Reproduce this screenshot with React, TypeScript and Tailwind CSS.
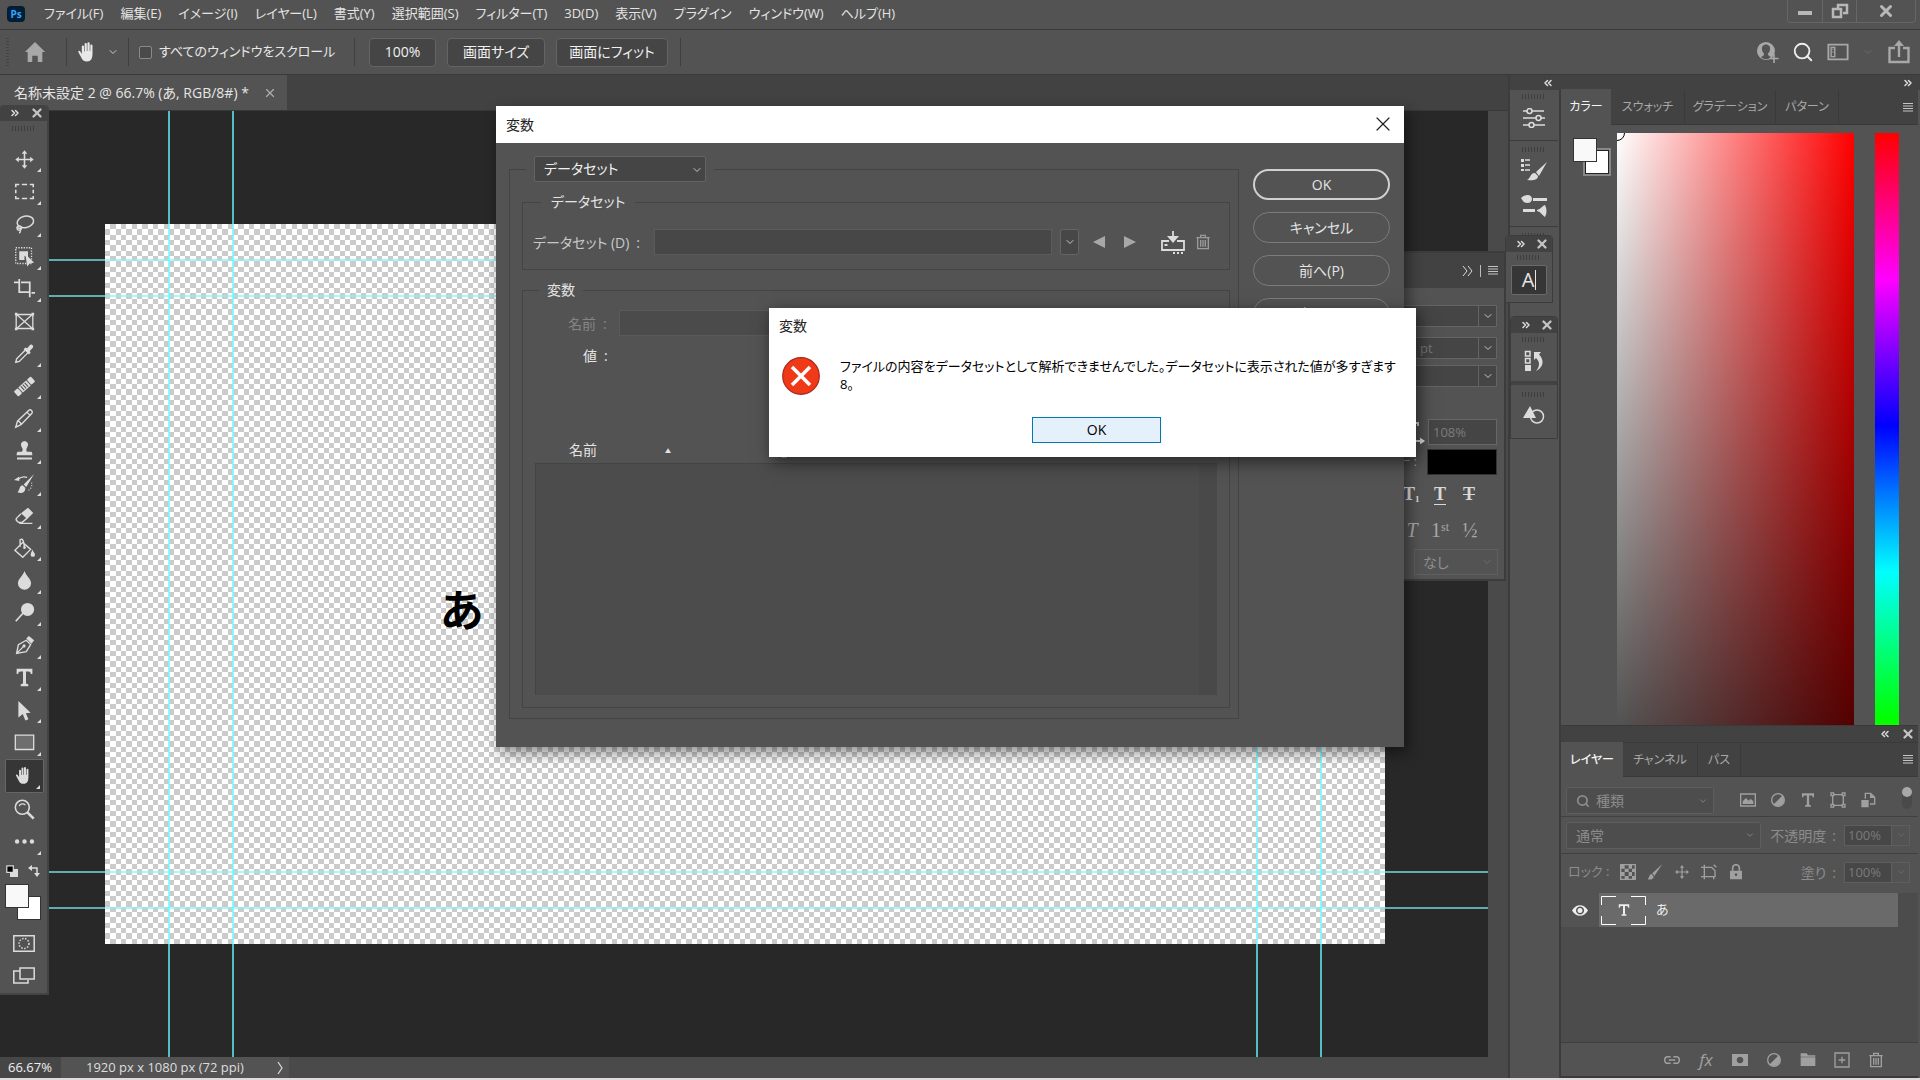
import { ReactNode } from 'react';
import { Search, X, ChevronDown, ChevronsRight, ChevronsLeft } from 'lucide-react';
import { clsx } from 'clsx';

interface IconProps {
  children: ReactNode;
  box?: string;
  className?: string;
}

const Icon = ({ children, box = '0 0 24 24', className = 'w-6 h-6' }: IconProps) => (
  <svg
    viewBox={box}
    className={clsx('shrink-0', className)}
    fill="none"
    stroke="currentColor"
    strokeWidth="1.5"
    aria-hidden="true"
  >
    {children}
  </svg>
);

const solid = { fill: 'currentColor', stroke: 'none' };

const HAND =
  'M7.5 13.5V5.5a1.1 1.1 0 0 1 2.2 0V11h.6V3.5a1.1 1.1 0 0 1 2.3 0V11h.6V4a1.1 1.1 0 0 1 2.2 0v7.5h.6V6.5a1.1 1.1 0 0 1 2.2 0v7.5l1.5-2.6c.8-1.2 2.4-.5 1.9.8L19 17c-1.2 3-3 4.5-6 4.5-4 0-5.5-3-5.5-8z';

const HandIcon = ({ className = 'w-6 h-6' }: { className?: string }) => (
  <Icon className={clsx('-scale-x-100', className)}>
    <path {...solid} d={HAND} />
  </Icon>
);

const LetterT = ({ className = 'w-6 h-6' }: { className?: string }) => (
  <Icon className={className}>
    <path {...solid} d="M3 2h18v6h-1.800c-.3-2-1-2.800-2.800-2.800h-2.700V18c0 1.200.6 1.600 2.600 1.700V22H7.700v-2.300c2-.1 2.600-.5 2.600-1.700V5.200H7.600C5.800 5.200 5.100 6 4.800 8H3z" />
  </Icon>
);

const MoveIcon = ({ className = 'w-6 h-6' }: { className?: string }) => (
  <Icon className={className}>
    <path d="M12 4v16M4 12h16" strokeWidth="1.8" />
    <path {...solid} d="M12 1.500l3.200 4H8.800zM12 22.500l3.200-4H8.800zM1.500 12l4-3.200v6.400zM22.500 12l-4-3.200v6.400z" />
  </Icon>
);

const Trash = ({ className = 'w-5 h-5' }: { className?: string }) => (
  <Icon className={className}>
    <path d="M2 5.500h20M8.500 5V2h7v3M4 6v16h16V6M8.500 9v10M12 9v10M15.500 9v10" strokeWidth="2" />
  </Icon>
);

const HalfCircle = ({ className = 'w-5 h-5' }: { className?: string }) => (
  <Icon className={className}>
    <circle cx="12" cy="12" r="9.500" strokeWidth="2" />
    <path {...solid} d="M18.700 5.300A9.500 9.500 0 0 1 5.300 18.700z" />
  </Icon>
);

const tools: { name: string; more: boolean; icon: ReactNode }[] = [
  { name: '移動ツール', more: true, icon: <MoveIcon /> },
  {
    name: '長方形選択ツール',
    more: true,
    icon: <Icon><path d="M2 7V4h4M9 4h6M18 4h4v3M22 10v4M22 17v3h-4M15 20H9M6 20H2v-3M2 14v-4" strokeWidth="1.8" /></Icon>,
  },
  {
    name: 'なげなわツール',
    more: true,
    icon: (
      <Icon>
        <ellipse cx="13" cy="9" rx="9.500" ry="6.500" transform="rotate(-12 13 9)" strokeWidth="1.700" />
        <circle cx="6" cy="16" r="2.500" />
        <path d="M3 15c3 2 5 2 6 1M7 18c1 2 0 3-1 4" />
      </Icon>
    ),
  },
  {
    name: 'オブジェクト選択ツール',
    more: true,
    icon: (
      <Icon>
        <path d="M2 2h18v18H2z" strokeDasharray="1.500 1.500" />
        <path {...solid} d="M6 6h10v8l-4-3v5H6zM13 9l10 10-4.500.5-3.500 4z" />
      </Icon>
    ),
  },
  { name: '切り抜きツール', more: true, icon: <Icon><path d="M0 5h5M6 1v15h12M8 5h10v17M20 17h4" strokeWidth="2" /></Icon> },
  {
    name: 'フレームツール',
    more: false,
    icon: (
      <Icon>
        <path d="M2.500 4h19v16h-19zM3 4l18 16M21 4L3 20" />
        <path {...solid} d="M1 2h3v3H1zM20 2h3v3h-3zM1 19h3v3H1zM20 19h3v3h-3z" />
      </Icon>
    ),
  },
  {
    name: 'スポイトツール',
    more: true,
    icon: (
      <Icon>
        <path d="M13 8l-10 10-1 4 4-1 10-10" strokeWidth="1.600" />
        <path {...solid} d="M11 7l2-2 2 1 3-3.500c2-2 5 1 3.500 3L18 9l1 2-2 2z" />
      </Icon>
    ),
  },
  {
    name: 'スポット修復ブラシツール',
    more: true,
    icon: (
      <Icon>
        <g transform="rotate(-42 12 12)">
          <rect {...solid} x="-1" y="8" width="6" height="8" rx="1.500" />
          <rect {...solid} x="19" y="8" width="6" height="8" rx="1.500" />
          <path {...solid} d="M6 8h12v8H6z" />
          <path d="M9 9v6M12 9v6M15 9v6" stroke="#535353" strokeWidth="1.200" />
        </g>
      </Icon>
    ),
  },
  {
    name: '鉛筆ツール',
    more: true,
    icon: <Icon><path d="M2 22l2-7L17 2.500c2-1.500 5 1.200 3.500 3.500L8 19zM15 5l4 4M4 15c2 0 4 2 4 4" strokeWidth="1.600" /></Icon>,
  },
  {
    name: 'コピースタンプツール',
    more: true,
    icon: (
      <Icon>
        <path {...solid} d="M12 1a4.500 4.500 0 0 1 3 7.500c-1.500 2-1 5 1 5h3.500c1.500 0 1.500 4 1.500 4H3s0-4 1.500-4H8c2 0 2.500-3 1-5A4.500 4.500 0 0 1 12 1zM3.500 20h17v2.200h-17z" />
      </Icon>
    ),
  },
  {
    name: 'ヒストリーブラシツール',
    more: true,
    icon: (
      <Icon>
        <path {...solid} d="M23 1L11 13l3 3zM10 14c-4 0-3 5-6 8 5 2 9 0 9-5zM0 8l6-4v5z" />
        <path d="M5 7c3-3 7-3 10-2" />
        <path d="M20 11c1 4-1 8-4 9" strokeDasharray="1 2" />
      </Icon>
    ),
  },
  {
    name: '消しゴムツール',
    more: true,
    icon: (
      <Icon>
        <path {...solid} d="M16 3l6 6-7 7-7-6.500z" />
        <path d="M8 10l-5 5c-2 2 2 5 3 5h3l6-5M6 21h15" strokeWidth="1.600" />
      </Icon>
    ),
  },
  {
    name: '塗りつぶしツール',
    more: true,
    icon: (
      <Icon>
        <path d="M10 5L1 14l9 8 9-9zM7 10V2c3-2 4 1 5 9" strokeWidth="1.600" />
        <circle {...solid} cx="12" cy="11" r="1.500" />
        <path {...solid} d="M21 13c1 3 3 4 3 6a2.500 2.500 0 0 1-5 0c0-2 1-3 2-6z" />
      </Icon>
    ),
  },
  { name: 'ぼかしツール', more: true, icon: <Icon><path {...solid} d="M12 1c2 6 7.500 9 7.500 14a7.500 7.500 0 0 1-15 0c0-5 5.500-8 7.500-14z" /></Icon> },
  {
    name: '覆い焼きツール',
    more: true,
    icon: (
      <Icon>
        <circle {...solid} cx="15.500" cy="8.500" r="7.500" />
        <path d="M11 12l-9 10" strokeWidth="2" />
      </Icon>
    ),
  },
  {
    name: 'ペンツール',
    more: true,
    icon: (
      <Icon>
        <path d="M3 21l2-10 9-5 5 5-5 8zM3 21l8-8" strokeWidth="1.600" />
        <circle {...solid} cx="11.500" cy="12.500" r="1.800" />
        <path {...solid} d="M14 4l3-3 6 5-3 4z" />
      </Icon>
    ),
  },
  { name: '文字ツール', more: true, icon: <LetterT /> },
  {
    name: 'パス選択ツール',
    more: true,
    icon: <Icon><path {...solid} d="M5 1l14 13.500-5.500.5 3 7-3.500 1.500-3-7.500L5 20z" /></Icon>,
  },
  { name: '長方形ツール', more: true, icon: <Icon><path d="M1.500 3.500h21v16.500h-21z" fill="#6e6e6e" /></Icon> },
  { name: '手のひらツール', more: true, icon: <HandIcon /> },
  {
    name: 'ズームツール',
    more: false,
    icon: (
      <Icon>
        <circle cx="9.500" cy="9.500" r="8" strokeWidth="1.800" />
        <path d="M6 8c1-3 5-3 7-1" />
        <path d="M15 15l7.500 7.500" strokeWidth="3" />
      </Icon>
    ),
  },
  {
    name: 'ツールバーを編集',
    more: true,
    icon: (
      <Icon>
        <g {...solid}>
          <circle cx="3.500" cy="12" r="2.500" />
          <circle cx="12" cy="12" r="2.500" />
          <circle cx="20.500" cy="12" r="2.500" />
        </g>
      </Icon>
    ),
  },
];

const menus = [
  'ファイル(F)',
  '編集(E)',
  'イメージ(I)',
  'レイヤー(L)',
  '書式(Y)',
  '選択範囲(S)',
  'フィルター(T)',
  '3D(D)',
  '表示(V)',
  'プラグイン',
  'ウィンドウ(W)',
  'ヘルプ(H)',
];

const Grip = () => (
  <div className="h-[5px] w-6 mx-auto bg-[repeating-linear-gradient(to_right,#3e3e3e_0_1px,transparent_1px_3px)]" />
);

const PanelMenu = () => (
  <button aria-label="パネルメニュー" className="text-[#c4c4c4]">
    <Icon box="0 0 10 9" className="w-[10px] h-[9px]">
      <path d="M0 .5h10M0 3h10M0 5.500h10M0 8h10" strokeWidth="1" />
    </Icon>
  </button>
);

const FloatHeader = () => (
  <div className="h-4 shrink-0 bg-[#424242] rounded-t flex items-center justify-between pl-[9px] pr-[3px] text-[#dcdcdc]">
    <ChevronsRight className="w-3 h-3" strokeWidth={3} />
    <X className="w-[14px] h-[14px] text-[#c4c4c4]" strokeWidth={4} />
  </div>
);

const Divider = () => <div className="w-px h-7 bg-[#404040] shrink-0" />;

function MenuBar() {
  return (
    <header className="h-[30px] shrink-0 flex items-start border-b border-[#3a3a3a]">
      <div className="w-[18px] h-4 mt-[6px] ml-[7px] rounded-sm bg-[#001e36] text-[#31a8ff] text-[10px] leading-4 font-bold text-center">Ps</div>
      <nav className="flex gap-[17px] ml-[19px] text-[13px] leading-[27px] text-[#e4e4e4]">
        {menus.map((m) => (
          <button key={m} className="whitespace-nowrap">
            {m}
          </button>
        ))}
      </nav>
      <div className="ml-auto mr-1 h-[23px] flex border border-t-0 border-[#666] rounded-b text-[#b8b8b8]">
        <button aria-label="最小化" className="w-[35px] flex justify-center items-center border-r border-[#666]">
          <span className="w-[14px] h-1 mt-1 bg-[#b8b8b8]" />
        </button>
        <button aria-label="元に戻す" className="w-[34px] flex justify-center items-center border-r border-[#666]">
          <Icon box="0 0 18 16" className="w-[18px] h-4">
            <path d="M7 5V2h9v8h-4M2 6h8v8H2z" strokeWidth="2.500" />
          </Icon>
        </button>
        <button aria-label="閉じる" className="w-[58px] flex justify-center items-center">
          <X className="w-[18px] h-[18px]" strokeWidth={4} />
        </button>
      </div>
    </header>
  );
}

function OptionsBar() {
  const btn = 'h-[29px] border border-[#646464] rounded-sm bg-[#454545] text-[14px] leading-6 text-[#f0f0f0] whitespace-nowrap';
  return (
    <div className="h-[45px] shrink-0 flex items-center border-b border-[#3a3a3a] pr-[9px]">
      <div className="w-[3px] h-7 ml-[6px] bg-[repeating-linear-gradient(to_bottom,#444_0_1px,transparent_1px_3px)]" />
      <button aria-label="ホーム" className="ml-[15px] mr-5 text-[#a8a8a8]">
        <Icon className="w-[22px] h-[22px]">
          <path {...solid} d="M12 1l11 11h-3v11h-5v-7H9v7H4V12H1z" />
        </Icon>
      </button>
      <Divider />
      <button aria-label="手のひらツール" className="ml-[9px] text-[#e8e8e8]">
        <HandIcon />
      </button>
      <ChevronDown className="w-3 h-3 ml-[7px] mr-[9px] text-[#c8c8c8]" />
      <Divider />
      <label className="flex items-center gap-[7px] ml-[10px] text-[13px] text-[#e8e8e8] whitespace-nowrap w-[215px]">
        <input type="checkbox" className="appearance-none w-[13px] h-[13px] border border-[#8a8a8a] rounded-xs bg-[#4a4a4a]" />
        すべてのウィンドウをスクロール
      </label>
      <Divider />
      <div className="flex gap-[11px] ml-[14px] mr-3">
        <button className={clsx(btn, 'w-[67px]')}>100%</button>
        <button className={clsx(btn, 'w-[98px]')}>画面サイズ</button>
        <button className={clsx(btn, 'w-[112px]')}>画面にフィット</button>
      </div>
      <Divider />
      <div className="ml-auto flex items-center gap-[13px] text-[#a8a8a8]">
        <button aria-label="ユーザーを追加">
          <Icon className="w-6 h-6">
            <path {...solid} fillRule="evenodd" d="M11 2a9 9 0 1 1-.1 18A9 9 0 0 1 11 2zm0 2.500c-3 0-4.500 2.500-4 5 .2 2 1 3 2 4 0 2-1 2.500-3 3.500 3 3 7 3 10 0-2-1-3-1.500-3-3.500 1-1 1.800-2 2-4 .5-2.500-1-5-4-5z" />
            <path d="M19 14v9M14.500 18.500h9" strokeWidth="1.600" />
          </Icon>
        </button>
        <button aria-label="検索" className="text-[#eee]">
          <Search className="w-[22px] h-[22px]" />
        </button>
        <button aria-label="ワークスペース">
          <Icon className="w-[22px] h-[22px]">
            <path d="M1.500 4h21v16h-21z" strokeWidth="2" />
            <path d="M4.500 7h4v10h-4zM6 9h1M6 12h1" />
          </Icon>
        </button>
        <ChevronDown className="w-3 h-3 text-[#6a6a6a]" />
        <button aria-label="共有">
          <Icon className="w-6 h-6">
            <path d="M8 8H2.500v14h19V8H16M12 17V4" strokeWidth="2.400" />
            <path {...solid} d="M12 0l5 6H7z" />
          </Icon>
        </button>
      </div>
    </div>
  );
}

// The transparency grid repeats every six squares, which is exactly 32px at 66.7%.
const STOPS = [0, 5, 11, 16, 21, 27, 32];

const Checkerboard = () => (
  <svg className="absolute inset-0 w-full h-full" shapeRendering="crispEdges" aria-hidden="true">
    <pattern id="grid" width="32" height="32" patternUnits="userSpaceOnUse">
      <rect width="32" height="32" fill="#fff" />
      {[0, 1, 2, 3, 4, 5].map((r) =>
        [0, 1, 2, 3, 4, 5]
          .filter((c) => (r + c) % 2 === 1)
          .map((c) => (
            <rect
              key={`${r}-${c}`}
              x={STOPS[c]}
              y={STOPS[r]}
              width={STOPS[c + 1] - STOPS[c]}
              height={STOPS[r + 1] - STOPS[r]}
              fill="#cbcbcb"
            />
          )),
      )}
    </pattern>
    <rect width="100%" height="100%" fill="url(#grid)" />
  </svg>
);

function DocumentArea() {
  const hGuide = 'absolute inset-x-0 h-[2px] bg-[#7ff4f4]/65';
  const vGuide = 'absolute inset-y-0 w-[2px] bg-[#5fffff]/70';
  return (
    <main className="flex-1 min-w-0 flex flex-col">
      <div className="h-9 shrink-0 bg-[#424242] flex border-b border-[#383838]">
        <div className="w-[287px] bg-[#535353] flex items-center justify-between pl-[14px] pr-[10px] text-[14px] text-[#e6e6e6] whitespace-nowrap">
          <span>名称未設定 2 @ 66.7% (あ, RGB/8#) *</span>
          <X className="w-[14px] h-[14px] text-[#b0b0b0]" />
        </div>
      </div>
      <div className="flex-1 min-h-0 flex bg-[#4a4a4a]">
        <div className="relative flex-1 overflow-hidden bg-[#282828]">
          <div className="absolute left-[105px] top-[113px] w-[1280px] h-[720px]">
            <Checkerboard />
            <span className="absolute left-[335px] top-[356px] text-[44px] leading-[60px] font-bold text-black">あ</span>
          </div>
          <div className={clsx(hGuide, 'top-[148px]')} />
          <div className={clsx(hGuide, 'top-[184px]')} />
          <div className={clsx(hGuide, 'top-[760px]')} />
          <div className={clsx(hGuide, 'top-[796px]')} />
          <div className={clsx(vGuide, 'left-[168px]')} />
          <div className={clsx(vGuide, 'left-[232px]')} />
          <div className={clsx(vGuide, 'left-[1256px]')} />
          <div className={clsx(vGuide, 'left-[1320px]')} />
        </div>
        <div className="w-5 bg-[#4a4a4a]" />
      </div>
      <footer className="h-[21px] shrink-0 flex items-center bg-[#4a4a4a] text-[13px] leading-[21px] text-[#dedede] whitespace-nowrap">
        <span className="w-[61px] pl-2 bg-[#464646] text-[#f0f0f0]">66.67%</span>
        <span className="w-[228px] pl-[25px] flex items-center justify-between bg-[#535353]">
          1920 px x 1080 px (72 ppi)
          <Icon box="0 0 6 14" className="w-[6px] h-[14px] mr-[6px]">
            <path d="M1 1l4 6-4 6" strokeWidth="1.200" />
          </Icon>
        </span>
      </footer>
    </main>
  );
}

function Toolbox() {
  return (
    <aside className="absolute left-0 top-[105px] w-[49px] h-[890px] flex flex-col bg-[#535353] border-r-2 border-b-2 border-[#434343] text-[#dcdcdc] rounded-t">
      <FloatHeader />
      <div className="pt-[5px] pb-3">
        <Grip />
      </div>
      <div className="h-[715px] shrink-0 flex flex-col">
        {tools.map((t) => (
          <button
            key={t.name}
            aria-label={t.name}
            className={clsx(
              'relative flex-1 ml-[5px] mr-[3px] flex items-center justify-center',
              t.name === '手のひらツール' && 'bg-[#363636] rounded-xs border border-[#666]',
            )}
          >
            <span className="[&>svg]:w-[21px] [&>svg]:h-[21px]">{t.icon}</span>
            {t.more && (
              <Icon box="0 0 4 4" className="absolute right-[3px] bottom-[3px] w-1 h-1">
                <path {...solid} d="M4 0v4H0z" />
              </Icon>
            )}
          </button>
        ))}
      </div>
      <div className="flex justify-between pl-[6px] pr-[7px] pt-[7px] h-[26px]">
        <Icon box="0 0 12 12" className="w-3 h-3">
          <path {...solid} d="M4 4h8v8H4z" />
          <path d="M.8.800h6.500v6.500H.8z" fill="#000" strokeWidth="1.200" />
        </Icon>
        <Icon box="0 0 12 12" className="w-3 h-3">
          <path d="M2 3h7v7" />
          <path {...solid} d="M0 3l4-3v6zM9 12L6 8h6z" />
        </Icon>
      </div>
      <div className="relative shrink-0 ml-[5px] w-9 h-9 mb-[15px]">
        <div className="absolute right-0 bottom-0 w-6 h-6 bg-white border border-[#333]" />
        <div className="absolute left-0 top-0 w-6 h-6 bg-[#faf9fa] border border-[#333]" />
      </div>
      <button aria-label="クイックマスク" className="h-[18px] flex justify-center">
        <Icon box="0 0 22 17" className="w-[22px] h-[17px]">
          <path d="M.8.800h20.400v15.400H.8z" />
          <circle cx="11" cy="8.500" r="5" strokeDasharray="1.500 1.500" />
        </Icon>
      </button>
      <button aria-label="スクリーンモード" className="mt-[14px] h-[18px] flex justify-center">
        <Icon box="0 0 22 17" className="w-[22px] h-[17px]">
          <path d="M15 13v3H.8V4H7M7 1h14.200v11H7z" />
        </Icon>
      </button>
    </aside>
  );
}

function CharacterPanel() {
  const combo = 'h-[22px] flex border border-[#646464] bg-[#454545] text-[13px] text-[#777]';
  const arrow = 'w-[18px] flex items-center justify-center border-l border-[#646464] text-[#c8c8c8]';
  return (
    <section className="absolute left-[1300px] top-[251px] w-[206px] h-[330px] bg-[#535353] border-2 border-[#3c3c3c] flex flex-col text-[#dcdcdc]">
      <div className="h-[35px] bg-[#424242] flex items-center justify-end gap-[7px] pr-[6px]">
        <Icon box="0 0 11 10" className="w-[11px] h-[10px]">
          <path d="M1 0l4 5-4 5M6 0l4 5-4 5" strokeWidth="1" />
        </Icon>
        <span className="w-px h-3 bg-[#bbb]" />
        <PanelMenu />
      </div>
      <div className="pt-[17px] pl-3 pr-[7px] flex flex-col">
        {['', 'pt', ''].map((v, i) => (
          <div key={i} className={clsx(combo, i === 1 ? 'mt-[10px]' : i === 2 && 'mt-[6px]')}>
            <span className="flex-1 pl-[105px] leading-5">{v}</span>
            <button aria-label="一覧" className={arrow}>
              <ChevronDown className="w-3 h-3" />
            </button>
          </div>
        ))}
        <div className="flex justify-end items-center gap-[3px] mt-8">
          <Icon box="0 0 24 24" className="w-6 h-6 text-[#e4e4e4]">
            <path d="M3 6V3h14v3M10 3v14M7 17h6M4 21h17" strokeWidth="1.800" />
            <path {...solid} d="M19 17.500l5 3.500-5 3.500z" />
          </Icon>
          <input
            aria-label="水平比率"
            disabled
            defaultValue="108%"
            className="w-[69px] h-[26px] border border-[#686868] bg-[#454545] pl-1 text-[13px] text-[#7c7c7c]"
          />
        </div>
        <div className="flex justify-end items-center gap-[10px] mt-1 text-[12px] text-[#a8a8a8]">
          カラー :
          <button aria-label="文字色" className="w-[70px] h-[26px] border border-[#333] bg-black" />
        </div>
      </div>
      <div className="flex justify-end gap-[13px] pr-[27px] mt-[7px] h-7 font-['Liberation_Serif',serif] text-[18px] leading-6 font-bold text-[#d8d8d8]">
        <button className="w-4 h-6">T<sub className="text-[9px]">1</sub></button>
        <button className="w-4 h-6 underline underline-offset-4">T</button>
        <button className="w-4 h-6 line-through">T</button>
      </div>
      <div className="flex justify-end gap-[10px] pr-[24px] mt-2 h-6 font-['Liberation_Serif',serif] text-[20px] leading-6 text-[#a8a8a8]">
        <button className="w-4 italic">T</button>
        <button className="w-5 whitespace-nowrap">1<sup className="text-[12px]">st</sup></button>
        <button className="w-5">½</button>
      </div>
      <div className="flex justify-end pr-[6px] mt-[7px]">
        <button className="w-[84px] h-[26px] border border-[#606060] flex items-center justify-between pl-2 pr-1 text-[14px] text-[#909090]">
          なし
          <ChevronDown className="w-3 h-3 text-[#6e6e6e]" />
        </button>
      </div>
    </section>
  );
}

function Dock() {
  return (
    <aside className="w-[51px] shrink-0 border-r-2 border-[#3c3c3c] flex flex-col text-[#dcdcdc] pr-px">
      <div className="h-[51px] flex flex-col pt-1 border-b border-[#3c3c3c]">
        <Grip />
        <button aria-label="属性" className="flex justify-center mt-[9px]">
          <Icon box="0 0 22 20" className="w-[22px] h-5">
            <path d="M0 3h4M9 3h12M0 10h13M18 10h4M0 17h6M11 17h11" />
            <circle cx="6.500" cy="3" r="2.500" />
            <circle cx="15.500" cy="10" r="2.500" />
            <circle cx="8.500" cy="17" r="2.500" />
          </Icon>
        </button>
      </div>
      <div className="h-[86px] flex flex-col items-center pt-[6px] border-b border-[#3c3c3c]">
        <Grip />
        <button aria-label="ブラシ設定" className="mt-[6px]">
          <Icon box="0 0 26 24" className="w-[26px] h-6">
            <path {...solid} d="M26 4L15 14l3 4zM14 15c-5 0-4 5-8 7 6 1 11 0 11-4zM0 1h3v3H0zM0 6h3v3H0zM0 11h3v2H0z" />
            <path d="M4 2h5M4 7h5M4 12h5" />
          </Icon>
        </button>
        <button aria-label="ブラシ" className="mt-[13px]">
          <Icon box="0 0 26 22" className="w-[26px] h-[22px]">
            <path {...solid} d="M0 3c4-4 11-4 11 1s-7 5-9 2zM12 3h14v3H12zM2 14h12v3H2zM16 15c4-1 5-4 8-5 2 4 2 8 0 12-3-2-4-5-8-6z" />
          </Icon>
        </button>
      </div>
      <div className="pt-[6px]">
        <Grip />
      </div>
    </aside>
  );
}

function DockFloats() {
  return (
    <>
      <section className="absolute left-[1505px] top-[235px] w-12 h-[68px] bg-[#535353] border border-[#3c3c3c] rounded-t flex flex-col gap-[3px]">
        <FloatHeader />
        <Grip />
        <button aria-label="文字パネル" className="mx-auto w-9 h-[30px] mt-[2px] bg-[#363636] border border-[#6a6a6a] rounded-xs flex items-center justify-center gap-px text-[20px] leading-6 text-[#e6e6e6]">
          A<span className="w-px h-5 bg-[#e6e6e6]" />
        </button>
      </section>
      <section className="absolute left-[1510px] top-[316px] w-12 bg-[#535353] border border-[#3c3c3c] rounded-t flex flex-col text-[#dcdcdc]">
        <FloatHeader />
        <div className="h-[52px] flex flex-col pt-1 border-b-4 border-[#424242]">
          <Grip />
          <button aria-label="ヒストリー" className="mt-2 flex justify-center">
            <Icon box="0 0 20 22" className="w-5 h-[22px]">
              <path d="M1.500 1.500h4.500V6H1.500zM1.500 8.500h4.500V13H1.500z" />
              <path {...solid} d="M1 15h6v6H1zM10 2h7l-2 2.500c6 6 4 13-3 16.500 4-5 4-9 0-13l-2 2z" />
            </Icon>
          </button>
        </div>
        <div className="h-[53px] pt-[7px]">
          <Grip />
          <button aria-label="シェイプ" className="mt-[9px] w-full flex justify-center">
            <Icon box="0 0 22 18" className="w-[22px] h-[18px]">
              <circle cx="14" cy="10.500" r="6.500" />
              <path {...solid} d="M7 0l6 12H0z" />
            </Icon>
          </button>
        </div>
      </section>
    </>
  );
}

function ColorPanel() {
  const tab = 'h-full border-r border-[#3a3a3a] whitespace-nowrap';
  return (
    <section className="flex-1 min-h-0 flex flex-col">
      <div className="h-[35px] shrink-0 bg-[#424242] border-b border-[#3a3a3a] flex items-center text-[12px] text-[#a8a8a8]">
        <button className="h-9 w-[50px] bg-[#535353] text-[#f4f4f4] whitespace-nowrap">カラー</button>
        <button className={clsx(tab, 'w-[74px]')}>スウォッチ</button>
        <button className={clsx(tab, 'w-[91px]')}>グラデーション</button>
        <button className={clsx(tab, 'w-[63px]')}>パターン</button>
        <div className="ml-auto mr-[5px] flex"><PanelMenu /></div>
      </div>
      <div className="flex-1 min-h-0 overflow-hidden flex pt-2 pl-3 pr-[19px]">
        <div className="relative w-[38px] h-[38px] mt-[5px] mr-[6px] shrink-0">
          <div className="absolute right-0 bottom-0 w-[28px] h-[28px] bg-[#888] p-[2px]">
            <div className="w-6 h-6 bg-white border border-[#222]" />
          </div>
          <div className="absolute left-0 top-0 w-6 h-6 bg-[#faf9fa] border border-[#333]" />
        </div>
        <div className="relative flex-1 h-[878px] overflow-hidden bg-[linear-gradient(to_bottom,transparent,#000),linear-gradient(to_right,#fff,#f00)]">
          <div className="absolute -left-2 -top-2 w-4 h-4 rounded-full border border-black" />
        </div>
        <div className="w-6 h-[878px] ml-[21px] bg-[linear-gradient(to_bottom,#f00,#f0f,#00f,#0ff,#0f0,#ff0,#f00)]" />
      </div>
    </section>
  );
}

function LayersPanel() {
  const tab = 'h-full border-r border-[#3a3a3a] whitespace-nowrap';
  const combo = 'h-[27px] border border-[#5e5e5e] rounded-xs bg-[#4d4d4d] flex items-center justify-between px-[9px] text-[14px] text-[#8c8c8c]';
  const percent = (label: string, id: string) => (
    <div className="ml-auto flex items-center text-[14px] text-[#8c8c8c] whitespace-nowrap">
      <label htmlFor={id} className="mr-2 flex gap-[6px]">
        {label}
        <span>:</span>
      </label>
      <input id={id} disabled defaultValue="100%" className="w-12 h-[21px] border border-[#5e5e5e] bg-[#474747] pl-[3px] text-[13px] text-[#7a7a7a]" />
      <span className="w-[18px] h-[21px] border border-l-0 border-[#5e5e5e] flex items-center justify-center">
        <ChevronDown className="w-[10px] h-[10px] text-[#6e6e6e]" />
      </span>
    </div>
  );
  return (
    <section className="h-[353px] shrink-0 flex flex-col bg-[#535353] border-t border-b-2 border-[#3a3a3a] text-[#a0a0a0]">
      <div className="h-4 shrink-0 bg-[#424242] flex items-center justify-end gap-[10px] pr-[3px] text-[#dcdcdc]">
        <ChevronsLeft className="w-3 h-3" strokeWidth={3} />
        <X className="w-[14px] h-[14px] text-[#c4c4c4]" strokeWidth={4} />
      </div>
      <div className="h-[35px] shrink-0 bg-[#424242] border-y border-[#3a3a3a] flex items-center text-[12px] text-[#a8a8a8]">
        <button className="h-[35px] w-[62px] bg-[#535353] text-[#f4f4f4] font-medium whitespace-nowrap">レイヤー</button>
        <button className={clsx(tab, 'w-[75px]')}>チャンネル</button>
        <button className={clsx(tab, 'w-[43px]')}>パス</button>
        <div className="ml-auto mr-[5px] flex"><PanelMenu /></div>
      </div>
      <div className="h-10 pt-[10px] pl-[5px] pr-1 flex border-b border-[#404040]">
        <button className={clsx(combo, 'w-[148px]')}>
          <span className="flex items-center gap-[6px]">
            <Search className="w-[14px] h-[14px]" strokeWidth={3} />
            種類
          </span>
          <ChevronDown className="w-[10px] h-[10px] -mr-1" />
        </button>
        <div className="flex gap-[14px] ml-[26px] mt-[5px]">
          <Icon className="w-4 h-4">
            <path d="M1 3h22v18H1z" strokeWidth="2" />
            <path {...solid} d="M4 18v-4l5-5 4 4 3-3 4 4v4z" />
          </Icon>
          <HalfCircle className="w-4 h-4" />
          <LetterT className="w-4 h-4" />
          <Icon className="w-4 h-4">
            <path d="M4 4h16v16H4z" strokeWidth="2" />
            <path d="M1.500 1.500h4v4h-4zM18.500 1.500h4v4h-4zM1.500 18.500h4v4h-4zM18.500 18.500h4v4h-4z" fill="#535353" strokeWidth="2" />
          </Icon>
          <Icon className="w-4 h-4">
            <path d="M8 10V2h8l6 6v10h-7" strokeWidth="2" />
            <path {...solid} d="M15 2v7h7M2 12h11v11H2z" />
          </Icon>
        </div>
        <span className="ml-auto mr-[2px] w-[10px] h-[22px] rounded-full bg-[#4a4a4a]">
          <span className="block w-[10px] h-[10px] rounded-full bg-[#a8a8a8]" />
        </span>
      </div>
      <div className="h-[37px] pl-[5px] pr-2 flex items-center border-b border-[#404040]">
        <button className={clsx(combo, 'w-[195px]')}>
          通常
          <ChevronDown className="w-[10px] h-[10px] -mr-1" />
        </button>
        {percent('不透明度', 'opacity')}
      </div>
      <div className="h-[39px] pl-[7px] pr-2 pb-[3px] flex items-center text-[14px]">
        <span className="w-[52px] text-[#8c8c8c] text-[13px] whitespace-nowrap">ロック :</span>
        <div className="flex gap-[11px]">
          <Icon className="w-4 h-4">
            <path d="M1 1h22v22H1z" strokeWidth="2" />
            <path {...solid} d="M1 1h6v6H1zM13 1h5v6h-5zM7 7h6v5H7zM18 7h5v5h-5zM1 12h6v6H1zM13 12h5v6h-5zM7 18h6v5H7zM18 18h5v5h-5z" />
          </Icon>
          <Icon className="w-4 h-4">
            <path {...solid} d="M23 0L8 14l3 4zM7 15c-4 0-3 5-6 8 5 1 9-1 9-4z" />
          </Icon>
          <MoveIcon className="w-4 h-4" />
          <Icon className="w-4 h-4">
            <path d="M0 5h16l5 5v9H0M5 1v22M19 23v-3M19 1l4 4" strokeWidth="2" />
          </Icon>
          <Icon className="w-4 h-4">
            <path {...solid} fillRule="evenodd" d="M3 10h18v13H3zM12 14a2 2 0 1 0 .1 0z" />
            <path d="M7 10V6a5 5 0 0 1 10 0v4" strokeWidth="2.500" />
          </Icon>
        </div>
        {percent('塗り', 'fill')}
      </div>
      <div className="flex-1 bg-[#4c4c4c] border-b border-[#404040]">
        <div className="h-[34px] mr-5 flex bg-[#535353] text-[#eee]">
          <button aria-label="表示" className="w-[38px] flex items-center justify-center">
            <Icon box="0 0 16 11" className="w-4 h-[11px]">
              <path {...solid} fillRule="evenodd" d="M0 5.500C4-1.500 12-1.500 16 5.500 12 12.500 4 12.500 0 5.500zM8 1.500a4 4 0 1 0 .1 0z" />
              <circle {...solid} cx="8" cy="5.500" r="2.500" />
            </Icon>
          </button>
          <div className="flex-1 flex items-center gap-[10px] pl-[2px] bg-[#6a6a6a] text-[13px]">
            <span className="relative w-[45px] h-[29px] flex items-center justify-center">
              <Icon box="0 0 45 29" className="absolute inset-0 w-[45px] h-[29px]">
                <path d="M.5 9V.5H15M30 .5h14.500V9M44.500 20v8.500H30M15 28.500H.5V20" stroke="#fff" strokeWidth="1" />
              </Icon>
              <LetterT className="w-[14px] h-[14px]" />
            </span>
            あ
          </div>
        </div>
      </div>
      <div className="h-[33px] shrink-0 flex items-center justify-end gap-[18px] pr-[34px]">
        <Icon className="w-4 h-4">
          <path d="M10 7H6a5 5 0 0 0 0 10h4M14 7h4a5 5 0 0 1 0 10h-4M7 12h10" strokeWidth="2.200" />
        </Icon>
        <button className="w-4 italic text-[17px] leading-5 whitespace-nowrap">fx</button>
        <Icon className="w-4 h-4">
          <path {...solid} fillRule="evenodd" d="M0 3h24v18H0zM12 7a5 5 0 1 0 .1 0z" />
        </Icon>
        <HalfCircle className="w-4 h-4" />
        <Icon className="w-4 h-4">
          <path {...solid} d="M1 2h9l2 3h11v2H1zM1 8h22v13H1z" />
        </Icon>
        <Icon className="w-4 h-4">
          <path d="M1.500 1.500h21v21h-21zM12 7v10M7 12h10" strokeWidth="2" />
        </Icon>
        <Trash className="w-4 h-4" />
      </div>
    </section>
  );
}

function VariablesDialog() {
  const pill = 'h-[31px] w-[137px] rounded-full text-[14px] whitespace-nowrap';
  const pillDim = 'border border-[#7c7c7c]';
  return (
    <div role="dialog" aria-label="変数" className="absolute left-[496px] top-[106px] w-[908px] h-[641px] flex flex-col bg-[#535353] shadow-[4px_6px_14px_rgba(0,0,0,0.45)] text-[#e4e4e4]">
      <div className="h-[37px] shrink-0 bg-white flex items-center justify-between pl-[10px] pr-[9px] pb-px text-[14px] text-[#222]">
        変数
        <button aria-label="閉じる"><X className="w-6 h-6" strokeWidth={1.2} /></button>
      </div>
      <div className="flex-1 min-h-0 flex gap-[14px] pl-[13px] pr-[14px] pt-[13px] pb-7 items-stretch">
        <fieldset className="flex-1 min-w-0 border border-[#444] pl-3 pr-2">
          <legend className="ml-1 px-2">
            <div className="relative">
              <select aria-label="種類" className="appearance-none block w-[172px] h-[26px] border border-[#646464] rounded-xs bg-[#454545] pl-[9px] text-[14px] leading-5 text-[#f0f0f0]">
                <option>データセット</option>
              </select>
              <ChevronDown className="absolute right-[3px] top-2 w-3 h-3 text-[#c8c8c8] pointer-events-none" />
            </div>
          </legend>
          <fieldset className="mt-2 h-20 border border-[#444] pl-[10px] pr-[18px]">
            <legend className="ml-2 px-[10px] text-[14px] leading-6">データセット</legend>
            <div className="flex items-center mt-[15px] text-[14px] text-[#c8c8c8]">
              <label htmlFor="dataset" className="w-[121px] flex gap-[7px] whitespace-nowrap">
                データセット (D)
                <span>:</span>
              </label>
              <input id="dataset" disabled className="flex-1 min-w-0 h-[26px] border border-[#5c5c5c] bg-[#474747]" />
              <button aria-label="一覧" className="ml-2 w-[19px] h-[26px] border border-[#646464] rounded-xs bg-[#474747] flex items-center justify-center">
                <ChevronDown className="w-3 h-3" />
              </button>
              <button aria-label="前のデータセット" className="ml-[14px] text-[#a8a8a8]">
                <Icon box="0 0 12 12" className="w-3 h-3"><path {...solid} d="M12 0v12L0 6z" /></Icon>
              </button>
              <button aria-label="次のデータセット" className="ml-[19px] text-[#a8a8a8]">
                <Icon box="0 0 12 12" className="w-3 h-3"><path {...solid} d="M0 0v12l12-6z" /></Icon>
              </button>
              <button aria-label="データセットを保存" className="ml-[25px] text-[#dcdcdc]">
                <Icon box="0 0 24 24" className="w-6 h-6">
                  <path d="M8 11H1v9h22v-9h-7M12 1v7M3.500 15h3" strokeWidth="1.800" />
                  <path {...solid} d="M6 6h12l-6 7zM12 22h2v2h-2zM16 22h2v2h-2zM20 22h2v2h-2z" />
                </Icon>
              </button>
              <button aria-label="データセットを削除" className="ml-[10px] text-[#9a9a9a]"><Trash className="w-4 h-4" /></button>
            </div>
          </fieldset>
          <fieldset className="mt-2 h-[430px] border border-[#444] pl-3 pr-3 flex flex-col">
            <legend className="ml-1 px-2 text-[14px] leading-6">変数</legend>
            <div className="flex items-center mt-2 text-[14px] text-[#858585]">
              <label htmlFor="varname" className="w-[84px] pl-[33px] flex gap-[7px] whitespace-nowrap">
                名前
                <span>:</span>
              </label>
              <input id="varname" disabled className="flex-1 h-[26px] border border-[#5a5a5a] bg-[#4b4b4b]" />
            </div>
            <span className="mt-2 pl-[48px] flex gap-[7px] text-[14px] leading-6">
              値
              <span>:</span>
            </span>
            <table className="mt-[70px] w-full text-[14px] leading-6 text-left">
              <thead>
                <tr className="h-6">
                  <th className="w-[225px] pl-[34px] font-normal">名前<span className="ml-[68px] text-[6px] align-middle">▲</span></th>
                  <th className="w-[196px] pl-[20px] font-normal">値</th>
                  <th className="font-normal">レイヤー</th>
                </tr>
              </thead>
            </table>
            <div className="h-[232px] shrink-0 bg-[#4c4c4c] border-l border-t border-[#444] flex justify-end">
              <div className="w-[18px] bg-[#494949]" />
            </div>
          </fieldset>
        </fieldset>
        <div className="flex flex-col gap-3 pt-[13px]">
          <button className={clsx(pill, 'border-2 border-[#d0d0d0]')}>OK</button>
          <button className={clsx(pill, pillDim)}>キャンセル</button>
          <button className={clsx(pill, pillDim)}>前へ(P)</button>
          <button className={clsx(pill, pillDim)}>次へ(N)</button>
        </div>
      </div>
    </div>
  );
}

function ErrorDialog() {
  return (
    <div role="alertdialog" aria-label="変数" className="absolute left-[769px] top-[308px] w-[647px] h-[149px] flex flex-col bg-white text-black shadow-[3px_5px_16px_rgba(0,0,0,0.55)]">
      <h2 className="pl-[10px] pt-2 text-[14px] leading-5 text-[#222]">変数</h2>
      <div className="flex pl-[13px] pt-[21px] gap-5">
        <Icon box="0 0 38 38" className="w-[38px] h-[38px]">
          <circle cx="19" cy="19" r="18.300" fill="#f03a17" stroke="#a8281a" strokeWidth="1.200" />
          <path d="M10 10l18 18M28 10L10 28" stroke="#fff" strokeWidth="3.500" />
        </Icon>
        <p className="text-[13px] leading-[18px] whitespace-nowrap">
          ファイルの内容をデータセットとして解析できませんでした。データセットに表示された値が多すぎます
          <br />
          8。
        </p>
      </div>
      <button className="ml-[263px] mt-[22px] w-[129px] h-[26px] border border-[#0078b0] bg-[#e4f0fa] text-[14px] leading-6">OK</button>
    </div>
  );
}

export default function App() {
  return (
    <div
      lang="ja"
      className="relative h-screen flex flex-col overflow-hidden bg-[#535353] font-['Open_Sans','Noto_Sans_CJK_JP',sans-serif] [font-feature-settings:'palt'] border-b-2 border-[#dedcdc]"
    >
      <MenuBar />
      <OptionsBar />
      <div className="flex-1 min-h-0 flex">
        <DocumentArea />
        <div className="w-[412px] shrink-0 border-l-2 border-[#3c3c3c] flex flex-col">
          <div className="h-[15px] shrink-0 bg-[#424242] flex items-center justify-between pl-8 pr-[6px] text-[#dcdcdc]">
            <ChevronsLeft className="w-3 h-3" strokeWidth={3} />
            <ChevronsRight className="w-3 h-3" strokeWidth={3} />
          </div>
          <div className="flex-1 min-h-0 flex pr-[2px]">
            <Dock />
            <div className="flex-1 min-w-0 flex flex-col">
              <ColorPanel />
              <LayersPanel />
            </div>
          </div>
        </div>
      </div>
      <Toolbox />
      <CharacterPanel />
      <DockFloats />
      <VariablesDialog />
      <ErrorDialog />
    </div>
  );
}
